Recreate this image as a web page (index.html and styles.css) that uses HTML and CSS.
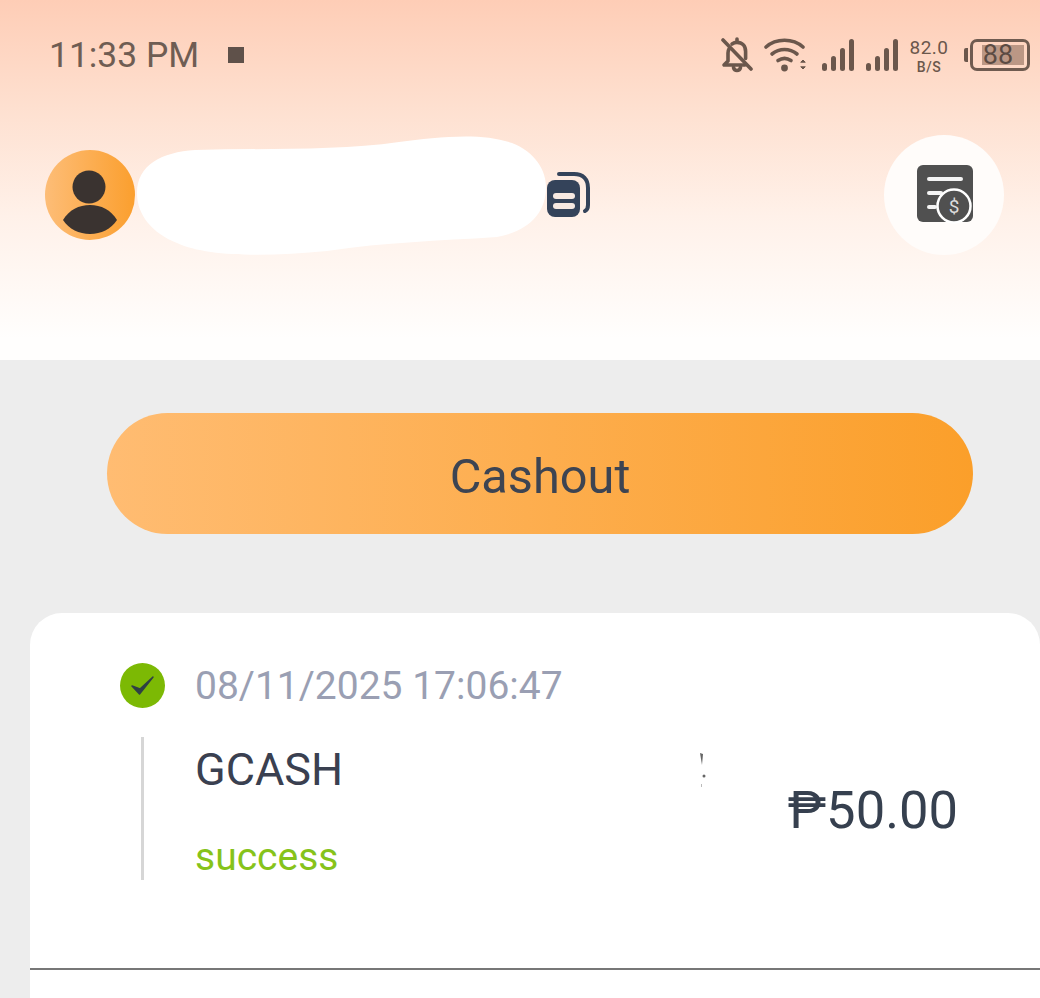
FILE: index.html
```html
<!DOCTYPE html>
<html lang="en">
<head>
    <meta charset="UTF-8">
    <meta name="viewport" content="width=device-width, initial-scale=1.0">
    <title>Cashout</title>
    <link rel="stylesheet" href="styles.css">
</head>
<body>
    <div class="header">
        <div class="status">
            <div class="status-left">
                <span class="time">11:33 PM</span>
                <span class="stop"></span>
            </div>
            <div class="status-right">
                <svg class="ic-bell" width="32" height="36" viewBox="0 0 32 36" fill="none" stroke="#6b574c" stroke-width="3.600" stroke-linejoin="round" stroke-linecap="round">
                    <path d="M8 12c-.6 1-1 2.400-1 4v8l-4 4h21"/>
                    <path d="M11 7c1.400-1 3-1.600 5-1.600 5 0 8.600 3.600 8.600 9v7"/>
                    <path d="M16 2v3"/>
                    <path d="M12.500 30.500c.5 2 1.800 3 3.500 3s3-1 3.500-3"/>
                    <path d="M2 3l28 29"/>
                </svg>
                <svg class="ic-wifi" width="44" height="36" viewBox="0 0 44 36" fill="none" stroke="#6b574c" stroke-width="3.600" stroke-linecap="round">
                    <path d="M2 10C12 1 29 1 39 10"/>
                    <path d="M8 17c7.500-6 17.500-6 25 0"/>
                    <path d="M14 23.500c4.500-3 8.500-3 13 0"/>
                    <circle cx="20.500" cy="31" r="3.400" fill="#6b574c" stroke="none"/>
                    <path d="M37 25l2-2 2 2z M37 30l2 2 2-2z" fill="#6b574c" stroke-width="1"/>
                </svg>
                <svg class="ic-signal" width="34" height="34" viewBox="0 0 34 34" fill="#6b574c">
                    <rect x="1" y="25" width="5" height="8" rx="2.500"/>
                    <rect x="10" y="18" width="5" height="15" rx="2.500"/>
                    <rect x="19" y="10" width="5" height="23" rx="2.500"/>
                    <rect x="28" y="1" width="5" height="32" rx="2.500"/>
                </svg>
                <svg class="ic-signal" width="34" height="34" viewBox="0 0 34 34" fill="#6b574c">
                    <rect x="1" y="25" width="5" height="8" rx="2.500"/>
                    <rect x="10" y="18" width="5" height="15" rx="2.500"/>
                    <rect x="19" y="10" width="5" height="23" rx="2.500"/>
                    <rect x="28" y="1" width="5" height="32" rx="2.500"/>
                </svg>
                <div class="speed">
                    <span class="speed-num">82.0</span>
                    <span class="speed-unit">B/S</span>
                </div>
                <div class="battery">
                    <span class="battery-tip"></span>
                    <div class="battery-body">
                        <span class="battery-level">88</span>
                    </div>
                </div>
            </div>
        </div>

        <div class="profile">
            <div class="profile-left">
                <svg class="avatar" width="90" height="90" viewBox="0 0 90 90">
                    <defs>
                        <linearGradient id="avatarFill" x1="0" y1="0" x2="1" y2="0">
                            <stop offset="0" stop-color="#fdbd77"/>
                            <stop offset="1" stop-color="#fb9f2e"/>
                        </linearGradient>
                    </defs>
                    <circle cx="45" cy="45" r="45" fill="url(#avatarFill)"/>
                    <circle cx="44" cy="37" r="16.500" fill="#3a3330"/>
                    <path d="M18 70C24 60 34 55 45 55S66 60 72 70C66 79 56 84 45 84S24 79 18 70z" fill="#3a3330"/>
                </svg>
                <!-- name is scribbled out in the screenshot -->
                <svg class="name" width="409" height="120" viewBox="0 0 409 120">
                    <path d="M0 58C0 30 25 17 58 15C130 13 200 16 262 7C300 2 345-3 375 8C398 17 409 35 409 52C409 78 392 96 360 102C300 106 250 107 190 116C130 122 70 122 40 108C15 98 0 80 0 58z" fill="#fff"/>
                </svg>
                <svg class="ic-copy" width="44" height="46" viewBox="0 0 44 46">
                    <path d="M12 2h15c9 0 14 5 14 14v17c0 3-1 5-3 6" fill="none" stroke="#34435a" stroke-width="4" stroke-linecap="round"/>
                    <rect x="0" y="8" width="33" height="37" rx="8" fill="#34435a"/>
                    <rect x="6" y="21" width="22" height="6" rx="3" fill="#f6e9e2"/>
                    <rect x="6" y="31" width="22" height="6" rx="3" fill="#f6e9e2"/>
                </svg>
            </div>
            <div class="bill-btn">
                <svg width="60" height="60" viewBox="0 0 60 60">
                    <rect x="3" y="0" width="56" height="57" rx="6" fill="#505050"/>
                    <rect x="13" y="12" width="36" height="4" rx="2" fill="#f4f4f4"/>
                    <rect x="13" y="26" width="16" height="4" rx="2" fill="#f4f4f4"/>
                    <rect x="13" y="40" width="10" height="4" rx="2" fill="#f4f4f4"/>
                    <circle cx="40" cy="41" r="16.500" fill="#505050" stroke="#fff" stroke-width="2.500"/>
                    <text class="bill-dollar" x="40" y="48" text-anchor="middle">$</text>
                </svg>
            </div>
        </div>
    </div>

    <div class="main">
        <div class="cashout-wrap">
            <button class="cashout" type="button">Cashout</button>
        </div>

        <div class="card">
            <div class="record">
                <div class="record-date">
                    <svg width="45" height="45" viewBox="0 0 45 45">
                        <circle cx="22.500" cy="22.500" r="22.500" fill="#7cb904"/>
                        <path d="M12 23l7.500 8L33 14l-13 12z" fill="#2f4045" stroke="#2f4045" stroke-width="1.500" stroke-linejoin="round"/>
                    </svg>
                    <span class="date">08/11/2025 17:06:47</span>
                </div>
                <div class="record-body">
                    <div class="record-info">
                        <div class="channel">GCASH</div>
                        <div class="state">success</div>
                    </div>
                    <svg class="specks" width="10" height="36" viewBox="0 0 10 36" fill="#666">
                        <path d="M1 1l3 1-1 11z"/>
                        <circle cx="5" cy="24" r="1.500"/>
                        <rect x="2" y="32" width="1" height="3" fill="#bbb"/>
                    </svg>
                    <div class="amount">₱50.00</div>
                </div>
            </div>
            <div class="divider"></div>
        </div>
    </div>
</body>
</html>
```

FILE: styles.css
```css
html, body {
    margin: 0;
    padding: 0;
}
body {
    font-family: Roboto, "Liberation Sans", sans-serif;
    background-color: #ededed;
    height: 998px;
    overflow: hidden;
}
.header {
    height: 360px;
    box-sizing: border-box;
    padding-top: 34px;
    background: linear-gradient(180deg, #fecdb6 0%, #fee0d0 30%, #fff1e9 60%, #fffefd 94%);
}
.status {
    display: flex;
    justify-content: space-between;
    align-items: center;
    height: 42px;
    padding: 0 10px 0 49px;
}
.status-left {
    display: flex;
    align-items: center;
    gap: 29px;
}
.time {
    font-size: 35.400px;
    color: #6f5d53;
}
.stop {
    width: 16px;
    height: 16px;
    background-color: #5f514a;
}
.status-right {
    display: flex;
    align-items: center;
}
.ic-bell {
    margin-right: 11px;
}
.ic-wifi {
    margin-right: 13px;
}
.ic-signal {
    margin-right: 10px;
}
.speed {
    display: flex;
    flex-direction: column;
    align-items: center;
    width: 40px;
    margin-right: 15px;
    color: #6b574c;
}
.speed-num {
    font-size: 19px;
    line-height: 24px;
    letter-spacing: .5px;
}
.speed-unit {
    font-size: 14px;
    line-height: 15px;
    font-weight: 500;
    letter-spacing: .5px;
}
.battery {
    display: flex;
    align-items: center;
}
.battery-tip {
    width: 4px;
    height: 14px;
    background-color: #6b574c;
    border-radius: 2px 0 0 2px;
    margin-right: 2px;
}
.battery-body {
    box-sizing: border-box;
    width: 60px;
    height: 32px;
    border: 3px solid #6f5b50;
    border-radius: 7px;
    padding: 3px 3px 3px 9px;
    display: flex;
}
.battery-level {
    flex: 1;
    background-color: #bb9785;
    color: #5b4b43;
    font-size: 27px;
    line-height: 20px;
    padding-right: 10px;
    text-align: center;
}
.profile {
    display: flex;
    justify-content: space-between;
    align-items: center;
    margin-top: 59px;
    padding: 0 36px 0 45px;
}
.profile-left {
    display: flex;
    align-items: center;
}
.avatar {
    flex: none;
}
.name {
    flex: none;
    margin: 0 1px 0 2px;
    overflow: visible;
}
.bill-btn {
    width: 120px;
    height: 120px;
    border-radius: 50%;
    background-color: #fffcfa;
    display: flex;
    justify-content: center;
    align-items: center;
}
.bill-dollar {
    font-size: 19px;
    fill: #dcdcdc;
}
.main {
    height: 638px;
}
.cashout-wrap {
    padding: 53px 67px 79px 107px;
}
.cashout {
    display: block;
    width: 100%;
    height: 121px;
    border: none;
    border-radius: 61px;
    background: linear-gradient(90deg, #ffbc72 0%, #fb9f2a 100%);
    color: #3d4452;
    font-family: inherit;
    font-size: 48.700px;
    padding: 5px 0 0;
}
.card {
    margin-left: 30px;
    height: 385px;
    background-color: #fff;
    border-radius: 32px 32px 0 0;
    padding-top: 50px;
    box-sizing: border-box;
}
.record {
    height: 305px;
    box-sizing: border-box;
    padding-left: 90px;
}
.record-date {
    display: flex;
    align-items: center;
    gap: 30px;
    height: 45px;
}
.date {
    font-size: 39px;
    color: #9a9fb3;
}
.record-body {
    position: relative;
    display: flex;
    justify-content: space-between;
    align-items: center;
    height: 143px;
    margin: 29px 0 0 21px;
    padding-left: 51px;
    padding-right: 82px;
    border-left: 3px solid #d6d6d6;
}
.record-info {
    padding-top: 5px;
}
.channel {
    font-size: 45px;
    color: #3a4050;
}
.state {
    margin-top: 38px;
    font-size: 39px;
    color: #86c31a;
}
.specks {
    position: absolute;
    left: 555px;
    top: 15px;
}
.amount {
    padding-top: 3px;
    font-size: 52.500px;
    color: #36404f;
}
.divider {
    height: 2px;
    background-color: #777;
}
```
